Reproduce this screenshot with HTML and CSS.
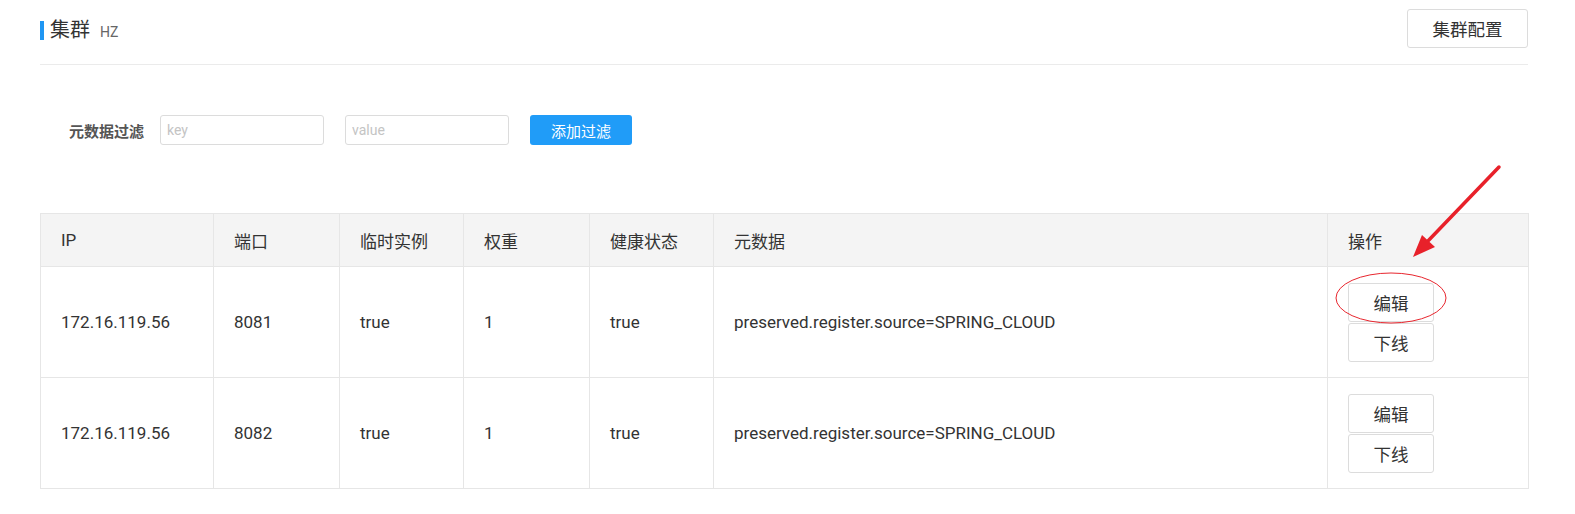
FILE: index.html
```html
<!DOCTYPE html>
<html lang="zh">
<head>
<meta charset="utf-8">
<title>集群</title>
<link rel="stylesheet" href="styles.css">
</head>
<body>
<div class="page">
  <div class="head">
    <div class="title"><span class="title-main">集群</span><span class="title-sub">HZ</span></div>
    <button class="btn btn-config">集群配置</button>
  </div>
  <div class="filter">
    <label class="filter-label">元数据过滤</label>
    <input class="inp" placeholder="key">
    <input class="inp inp-value" placeholder="value">
    <button class="btn-primary">添加过滤</button>
  </div>
  <table class="tbl">
    <colgroup>
      <col class="c1"><col class="c2"><col class="c3"><col class="c4"><col class="c5"><col class="c6"><col class="c7">
    </colgroup>
    <thead>
      <tr><th>IP</th><th>端口</th><th>临时实例</th><th>权重</th><th>健康状态</th><th>元数据</th><th>操作</th></tr>
    </thead>
    <tbody>
      <tr>
        <td>172.16.119.56</td><td>8081</td><td>true</td><td>1</td><td>true</td>
        <td>preserved.register.source=SPRING_CLOUD</td>
        <td><div class="ops"><button class="btn btn-op">编辑</button><button class="btn btn-op">下线</button></div></td>
      </tr>
      <tr>
        <td>172.16.119.56</td><td>8082</td><td>true</td><td>1</td><td>true</td>
        <td>preserved.register.source=SPRING_CLOUD</td>
        <td><div class="ops"><button class="btn btn-op">编辑</button><button class="btn btn-op">下线</button></div></td>
      </tr>
    </tbody>
  </table>
</div>
<svg class="annot" width="1575" height="514" viewBox="0 0 1575 514">
  <ellipse cx="1391" cy="298" rx="55" ry="25" fill="none" stroke="#e8262e" stroke-width="1"/>
  <line x1="1499" y1="167" x2="1427" y2="242" stroke="#e8212a" stroke-width="3.5" stroke-linecap="round"/>
  <polygon points="1413,257 1435,247 1422,235" fill="#e8212a"/>
</svg>
</body>
</html>
```
FILE: styles.css
```css
* { box-sizing: border-box; }
html, body { margin: 0; padding: 0; background: #fff; }
body {
  font-family: Roboto, "Noto Sans CJK SC", sans-serif;
  color: #333;
  position: relative;
  width: 1575px;
  height: 514px;
  overflow: hidden;
}
.page { padding: 0 47px 0 40px; }
.head {
  height: 65px;
  display: flex;
  align-items: center;
  justify-content: space-between;
  border-bottom: 1px solid #ebebeb;
}
.title {
  display: flex;
  align-items: baseline;
  border-left: 4px solid #1f96f3;
  padding-left: 6px;
  height: 19px;
  line-height: 19px;
  margin-top: -3px;
}
.title-main { font-size: 20px; color: #333; }
.title-sub { font-size: 14px; color: #666; margin-left: 10px; }
.btn {
  font-family: Roboto, "Noto Sans CJK SC", sans-serif;
  background: #fff;
  border: 1px solid #dcdcdc;
  border-radius: 3px;
  color: #333;
  cursor: pointer;
}
.btn-config {
  width: 121px;
  height: 39px;
  font-size: 17.5px;
  margin-top: -8px;
}
.filter {
  display: flex;
  align-items: center;
  height: 30px;
  margin-top: 50px;
  padding-left: 29px;
}
.filter-label {
  font-size: 15px;
  font-weight: bold;
  color: #555;
  width: 91px;
}
.inp {
  width: 164px;
  height: 30px;
  border: 1px solid #dcdcdc;
  border-radius: 3px;
  padding: 0 6px;
  font-family: Roboto, sans-serif;
  font-size: 14px;
  color: #333;
  outline: none;
}
.inp::placeholder { color: #c4c4c4; }
.inp-value { margin-left: 21px; }
.btn-primary {
  margin-left: 21px;
  width: 102px;
  height: 30px;
  border: none;
  border-radius: 3px;
  background: #209cf8;
  color: #fff;
  font-family: Roboto, "Noto Sans CJK SC", sans-serif;
  font-size: 15px;
}
.tbl {
  margin-top: 68px;
  width: 1488px;
  border-collapse: collapse;
  table-layout: fixed;
  font-size: 17px;
}
.c1 { width: 173px; }
.c2 { width: 126px; }
.c3 { width: 124px; }
.c4 { width: 126px; }
.c5 { width: 124px; }
.c6 { width: 614px; }
.c7 { width: 201px; }
.tbl th, .tbl td {
  border: 1px solid #e6e6e6;
  text-align: left;
  padding: 0 20px;
  color: #333;
  font-weight: normal;
}
.tbl th {
  background: #f4f4f4;
  height: 53px;
}
.tbl td { height: 111px; }
.ops {
  display: flex;
  flex-direction: column;
  gap: 1px;
  align-items: flex-start;
}
.btn-op {
  width: 86px;
  height: 39px;
  font-size: 17.5px;
}
.annot {
  position: absolute;
  left: 0;
  top: 0;
  pointer-events: none;
}
```
